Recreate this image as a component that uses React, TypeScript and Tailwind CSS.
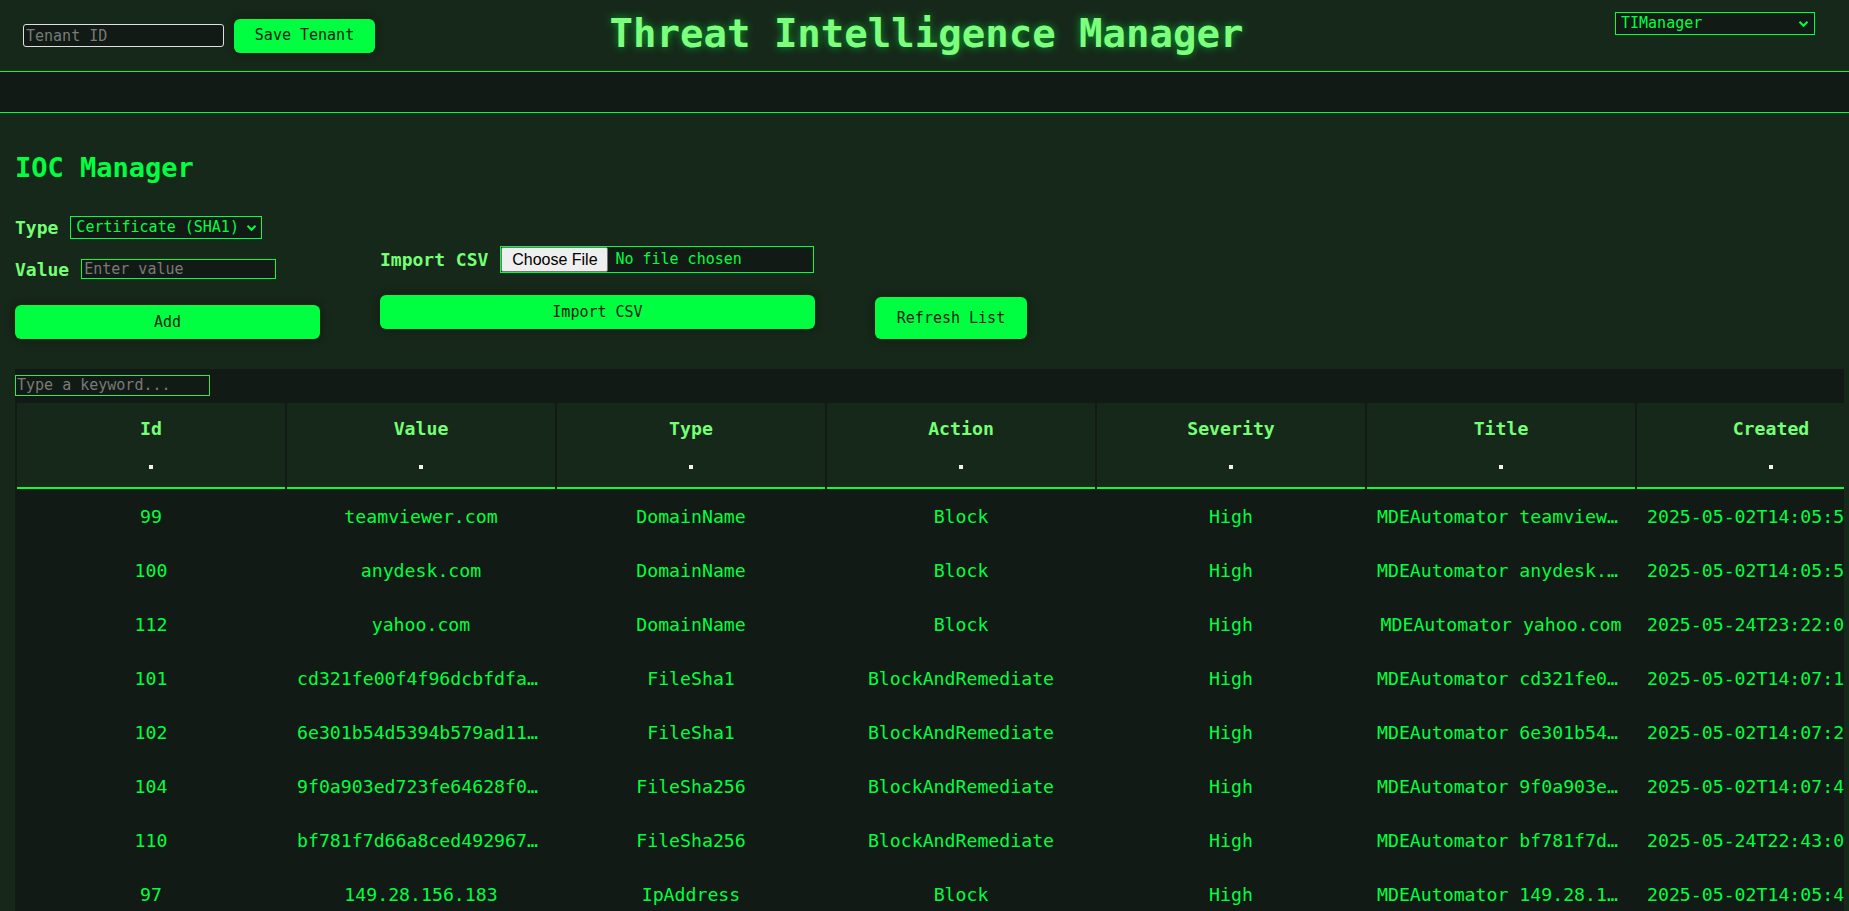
import React from "react";

type Ioc = {
  id: number;
  value: string;
  type: string;
  action: string;
  severity: string;
  title: string;
  created: string;
};

const rows: Ioc[] = [
  { id: 99, value: "teamviewer.com", type: "DomainName", action: "Block", severity: "High", title: "MDEAutomator teamviewer.com", created: "2025-05-02T14:05:52.4433333Z" },
  { id: 100, value: "anydesk.com", type: "DomainName", action: "Block", severity: "High", title: "MDEAutomator anydesk.com", created: "2025-05-02T14:05:53.1166667Z" },
  { id: 112, value: "yahoo.com", type: "DomainName", action: "Block", severity: "High", title: "MDEAutomator yahoo.com", created: "2025-05-24T23:22:06.5300000Z" },
  { id: 101, value: "cd321fe00f4f96dcbfdfa3b1c0e5a1f2d9b88c47", type: "FileSha1", action: "BlockAndRemediate", severity: "High", title: "MDEAutomator cd321fe00f4f96dcbfdfa3b1c0e5a1f2d9b88c47", created: "2025-05-02T14:07:14.8200000Z" },
  { id: 102, value: "6e301b54d5394b579ad11c2e6f0a8d77b4c1e903", type: "FileSha1", action: "BlockAndRemediate", severity: "High", title: "MDEAutomator 6e301b54d5394b579ad11c2e6f0a8d77b4c1e903", created: "2025-05-02T14:07:28.0533333Z" },
  { id: 104, value: "9f0a903ed723fe64628f0e1b7c5a4d3f2e19b8a7c6d5e4f3a2b1c0d9e8f7a6b5", type: "FileSha256", action: "BlockAndRemediate", severity: "High", title: "MDEAutomator 9f0a903ed723fe64628f0e1b7c5a4d3f2e19b8a7c6d5e4f3a2b1c0d9e8f7a6b5", created: "2025-05-02T14:07:41.3900000Z" },
  { id: 110, value: "bf781f7d66a8ced4929671a0c3e5b7d9f1a2c4e6b8d0f2a4c6e8b0d2f4a6c8e0", type: "FileSha256", action: "BlockAndRemediate", severity: "High", title: "MDEAutomator bf781f7d66a8ced4929671a0c3e5b7d9f1a2c4e6b8d0f2a4c6e8b0d2f4a6c8e0", created: "2025-05-24T22:43:02.7700000Z" },
  { id: 97, value: "149.28.156.183", type: "IpAddress", action: "Block", severity: "High", title: "MDEAutomator 149.28.156.183", created: "2025-05-02T14:05:49.9966667Z" },
  { id: 98, value: "45.77.120.18", type: "IpAddress", action: "Block", severity: "High", title: "MDEAutomator 45.77.120.18", created: "2025-05-02T14:05:50.6200000Z" },
];

const columns = ["Id", "Value", "Type", "Action", "Severity", "Title", "Created"];

const Chevron = () => (
  <svg width="11" height="8" viewBox="0 0 11 8" className="shrink-0">
    <path d="M1.5 1.8 L5.5 5.8 L9.5 1.8" fill="none" stroke="#00ff41" strokeWidth="2" />
  </svg>
);

const GreenButton = ({ label, className }: { label: string; className: string }) => (
  <button
    className={`bg-[#00ff41] text-[#0f2413] text-[15px] rounded-md shadow-[0_0_8px_rgba(0,0,0,0.35)] ${className}`}
  >
    {label}
  </button>
);

export default function App() {
  return (
    <div className="min-h-[911px] bg-[#16281a] font-['DejaVu_Sans_Mono',monospace] text-[#00ff41] overflow-hidden">
      {/* top bar */}
      <header className="h-[72px] border-b border-[#00ff41] grid grid-cols-[1fr_auto_1fr]">
        <div className="flex items-center gap-[10px] pl-[23px]">
          <input
            placeholder="Tenant ID"
            className="w-[201px] h-[23px] bg-[#111a14] border border-[#e0e0e0] rounded-[3px] px-[2px] text-[15px] placeholder:text-[#7a7a7a]"
          />
          <GreenButton label="Save Tenant" className="w-[141px] h-[34px]" />
        </div>
        <h1 className="mt-[11px] leading-[45px] text-[39px] font-bold text-[#7dff7d] [text-shadow:0_0_8px_rgba(0,255,65,0.55)] ml-[4px]">
          Threat Intelligence Manager
        </h1>
        <div className="flex justify-end items-start pr-[34px] pt-[12px]">
          <div className="w-[200px] h-[23px] border border-[#00ff41] bg-[#111a14] flex items-center justify-between pl-[5px] pr-[5px] text-[15px]">
            <span>TIManager</span>
            <Chevron />
          </div>
        </div>
      </header>
      <div className="h-[41px] bg-[#111a14] border-b border-[#00ff41]" />

      <main className="pt-[39px]">
        <h2 className="pl-[15px] text-[27px] leading-[32px] font-bold text-[#00ff41]">IOC Manager</h2>

        <div className="flex items-start gap-[60px] pl-[15px] mt-[32px]">
          <div className="w-[305px] flex flex-col">
            <div className="h-[23px] flex items-center gap-[12px]">
              <span className="text-[18px] font-bold text-[#74ff74]">Type</span>
              <div className="w-[192px] h-[23px] border border-[#00ff41] bg-[#111a14] flex items-center justify-between pl-[5px] pr-[4px] text-[15px]">
                <span>Certificate (SHA1)</span>
                <Chevron />
              </div>
            </div>
            <div className="h-[20px] mt-[20px] flex items-center gap-[12px]">
              <span className="text-[18px] font-bold text-[#74ff74]">Value</span>
              <input
                placeholder="Enter value"
                className="w-[195px] h-[20px] border border-[#00ff41] bg-[#111a14] px-[2px] text-[15px] placeholder:text-[#7a7a7a]"
              />
            </div>
            <GreenButton label="Add" className="mt-[26px] w-full h-[34px]" />
          </div>

          <div className="w-[435px] mt-[30px] flex flex-col">
            <div className="h-[27px] flex items-center gap-[12px]">
              <span className="text-[18px] font-bold text-[#74ff74]">Import CSV</span>
              <label className="w-[314px] h-[27px] border border-[#00ff41] bg-[#111a14] flex items-center gap-[7px] text-[15px]">
                <span className="h-[25px] w-[107px] bg-[#efefef] border border-[#767676] rounded-[2px] flex items-center justify-center text-black text-[16px] font-['Liberation_Sans',Arial,sans-serif]">
                  Choose File
                </span>
                <span>No file chosen</span>
              </label>
            </div>
            <GreenButton label="Import CSV" className="mt-[22px] w-full h-[34px]" />
          </div>

          <div className="mt-[81px]">
            <GreenButton label="Refresh List" className="w-[152px] h-[42px]" />
          </div>
        </div>

        <div className="mt-[30px] ml-[15px] mr-[5px] bg-[#111a14] pt-[6px] overflow-hidden h-[542px]">
          <input
            placeholder="Type a keyword..."
            className="block w-[195px] h-[21px] border border-[#2ee85a] bg-[#111a14] px-[1px] text-[15px] placeholder:text-[#7a7a7a]"
          />
          <table className="mt-[5px] table-fixed border-separate border-spacing-[2px] w-[1892px]">
            <thead>
              <tr>
                {columns.map((c) => (
                  <th
                    key={c}
                    className="w-[268px] h-[86px] bg-[#16281a] border-b-2 border-[#00ff41] p-0 align-top"
                  >
                    <div className="flex flex-col items-center pt-[14px]">
                      <span className="text-[18.2px] leading-[24px] font-bold text-[#74ff74]">{c}</span>
                      <span className="mt-[24px] w-[4px] h-[4px] bg-[#f2f2f2]" />
                    </div>
                  </th>
                ))}
              </tr>
            </thead>
            <tbody className="text-[18.2px]">
              {rows.map((r) => (
                <tr key={r.id}>
                  {[String(r.id), r.value, r.type, r.action, r.severity, r.title, r.created].map((v, i) => (
                    <td
                      key={i}
                      className="h-[52px] px-[10px] text-center whitespace-nowrap overflow-hidden text-ellipsis"
                    >
                      {v}
                    </td>
                  ))}
                </tr>
              ))}
            </tbody>
          </table>
        </div>
      </main>
    </div>
  );
}
